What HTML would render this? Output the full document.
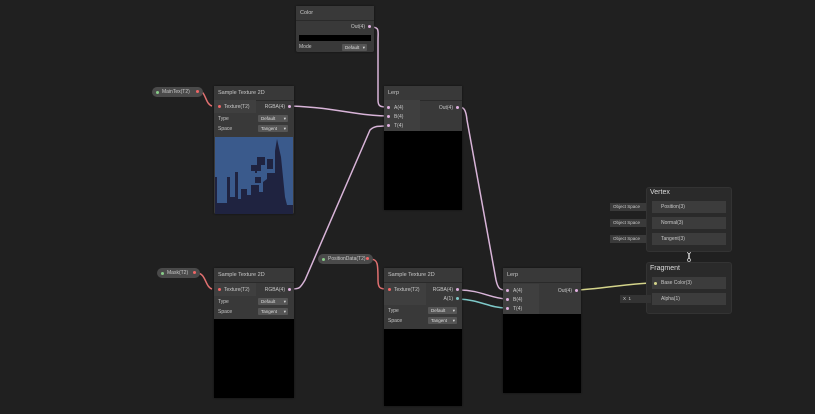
<!DOCTYPE html><html><head><style>
body{margin:0;width:815px;height:414px;background:#202020;overflow:hidden;position:relative;font-family:"Liberation Sans",sans-serif;font-size:5px;color:#c8c8c8}
.n{position:absolute;background:#393939;border-radius:2px;box-shadow:0 0 2px #111}
.h{height:14px;background:#393939;line-height:14px;padding-left:4px;font-size:5.5px;color:#c8c8c8;border-bottom:1px solid #2a2a2a}
.a{position:absolute}
.pv{position:absolute;background:#000}
.dd{position:absolute;background:#555;color:#ddd;height:7px;line-height:7px;font-size:4.5px;padding-left:3px;border-radius:1px}
.dd:after{content:"▾";position:absolute;right:2px}
.pill{position:absolute;background:#4a4a4a;border-radius:6px;height:10px;line-height:10px;font-size:5px;padding-left:10px}
.dot{position:absolute;width:3px;height:3px;border-radius:2px}
.mb{position:absolute;background:#2a2a2a;border:1px solid #333;border-radius:3px}
.row{position:absolute;background:#3c3c3c;height:12px;line-height:12px;font-size:5px;padding-left:9px;box-sizing:border-box}
.os{position:absolute;background:#3a3a3a;height:8px;line-height:8px;font-size:4.5px;padding-left:3px}
</style></head><body>
<svg class="a" style="left:0;top:0" width="815" height="414">
<g fill="none" stroke-width="1.5">
<path d="M370 27 C380 27 378 30 378 40 L378 100 C378 106 380 107 387 107" stroke="#d8b4d8"/>
<path d="M291 106 C340 108 350 115 387 116" stroke="#d8b4d8"/>
<path d="M291 289 C300 289 300 288 305 280 L370 130 C374 126 378 126 387 126" stroke="#d8b4d8"/>
<path d="M459 107 C464 107 466 110 467 120 L496 280 C498 289 500 290 506 290" stroke="#d8b4d8"/>
<path d="M459 290 C480 290 490 298 506 299" stroke="#d8b4d8"/>
<path d="M459 299 C480 300 490 308 506 308" stroke="#7ec8c8"/>
<path d="M578 290 C610 288 630 283 655 283" stroke="#d4d48a"/>
<path d="M199 91 C206 91 205 104 212 106" stroke="#e07070"/>
<path d="M197 273 C206 273 205 287 212 289" stroke="#e07070"/>
<path d="M370 259 C378 259 378 264 378 280 C378 288 380 289 387 289" stroke="#e07070"/>
<path d="M646 207 H656 M646 223 H656 M646 239 H656" stroke="#d4d48a"/>
<path d="M646 299 H656" stroke="#7ec8c8"/>
<path d="M689 252 V260" stroke="#ccc"/>
</g>
<circle cx="656" cy="207" r="1.8" fill="#202020" stroke="#d4d48a" stroke-width=".8"/>
<circle cx="656" cy="223" r="1.8" fill="#202020" stroke="#d4d48a" stroke-width=".8"/>
<circle cx="656" cy="239" r="1.8" fill="#202020" stroke="#d4d48a" stroke-width=".8"/>
<circle cx="656" cy="299" r="1.8" fill="#202020" stroke="#7ec8c8" stroke-width=".8"/>
<circle cx="689" cy="252" r="1.5" fill="#202020" stroke="#ccc" stroke-width=".8"/>
<circle cx="689" cy="260" r="1.5" fill="#202020" stroke="#ccc" stroke-width=".8"/>
</svg>

<div class="n" style="left:296px;top:6px;width:78px;height:46px"><div class="h">Color</div>
<div class="a" style="right:9px;top:18px">Out(4)</div><div class="dot" style="right:3px;top:19px;background:#e0b0e0"></div>
<div class="pv" style="left:3px;top:29px;width:72px;height:6px"></div>
<div class="a" style="left:3px;top:38px">Mode</div><div class="dd" style="left:46px;top:38px;width:22px">Default</div></div>

<div class="pill" style="left:152px;top:87px;width:41px">MainTex(T2)<div class="dot" style="left:4px;top:4px;background:#8c8"></div><div class="dot" style="right:4px;top:3px;background:#e66"></div></div>
<div class="pill" style="left:157px;top:268px;width:33px">Mask(T2)<div class="dot" style="left:4px;top:4px;background:#8c8"></div><div class="dot" style="right:4px;top:3px;background:#e66"></div></div>
<div class="pill" style="left:318px;top:254px;width:45px">PositionData(T2)<div class="dot" style="left:4px;top:4px;background:#8c8"></div><div class="dot" style="right:4px;top:3px;background:#e66"></div></div>

<div class="n" style="left:214px;top:86px;width:80px;height:128px"><div class="h">Sample Texture 2D</div>
<div class="a" style="left:0;top:14px;width:42px;height:13px;background:#3f3f3f"></div>
<div class="dot" style="left:4px;top:19px;background:#e66"></div><div class="a" style="left:10px;top:18px">Texture(T2)</div>
<div class="a" style="right:9px;top:18px">RGBA(4)</div><div class="dot" style="right:3px;top:19px;background:#e0b0e0"></div>
<div class="a" style="left:4px;top:30px">Type</div><div class="dd" style="left:44px;top:29px;width:27px">Default</div>
<div class="a" style="left:4px;top:40px">Space</div><div class="dd" style="left:44px;top:39px;width:27px">Tangent</div>
<svg class="a" style="left:1px;top:51px" width="78" height="77"><rect width="78" height="77" fill="#3a5a8c"/>
<path d="M0 77 V40 L2 40 V66 L12 66 V40 L15 40 V60 L20 60 V35 L23 35 V62 L26 62 V52 L32 52 V58 L36 58 V48 L44 48 V55 L48 55 V45 L52 42 V36 L60 36 V14 L62 2 L66 20 L68 40 L70 60 L72 68 L78 68 V77 Z" fill="#1f2340"/>
<path d="M42 20 H50 V28 H46 V34 H40 V40 H46 V46 H40 V36 H42Z M52 22 H58 V32 H52Z M36 28 H42 V34 H36Z" fill="#1f2340"/></svg></div>

<div class="n" style="left:384px;top:86px;width:78px;height:124px"><div class="h">Lerp</div>
<div class="a" style="left:0;top:14px;width:36px;height:31px;background:#3f3f3f"></div>
<div class="dot" style="left:3px;top:20px;background:#e0b0e0"></div><div class="a" style="left:10px;top:19px">A(4)</div>
<div class="dot" style="left:3px;top:29px;background:#e0b0e0"></div><div class="a" style="left:10px;top:28px">B(4)</div>
<div class="dot" style="left:3px;top:38px;background:#e0b0e0"></div><div class="a" style="left:10px;top:37px">T(4)</div>
<div class="a" style="right:9px;top:19px">Out(4)</div><div class="dot" style="right:3px;top:20px;background:#e0b0e0"></div>
<div class="pv" style="left:0;top:45px;width:78px;height:79px"></div></div>

<div class="n" style="left:214px;top:268px;width:80px;height:130px"><div class="h">Sample Texture 2D</div>
<div class="a" style="left:0;top:15px;width:42px;height:13px;background:#3f3f3f"></div>
<div class="dot" style="left:4px;top:20px;background:#e66"></div><div class="a" style="left:10px;top:19px">Texture(T2)</div>
<div class="a" style="right:9px;top:19px">RGBA(4)</div><div class="dot" style="right:3px;top:20px;background:#e0b0e0"></div>
<div class="a" style="left:4px;top:31px">Type</div><div class="dd" style="left:44px;top:30px;width:27px">Default</div>
<div class="a" style="left:4px;top:41px">Space</div><div class="dd" style="left:44px;top:40px;width:27px">Tangent</div>
<div class="pv" style="left:0;top:51px;width:80px;height:79px"></div></div>

<div class="n" style="left:384px;top:268px;width:78px;height:138px"><div class="h">Sample Texture 2D</div>
<div class="a" style="left:0;top:15px;width:42px;height:22px;background:#3f3f3f"></div>
<div class="dot" style="left:4px;top:20px;background:#e66"></div><div class="a" style="left:10px;top:19px">Texture(T2)</div>
<div class="a" style="right:9px;top:19px">RGBA(4)</div><div class="dot" style="right:3px;top:20px;background:#e0b0e0"></div>
<div class="a" style="right:9px;top:28px">A(1)</div><div class="dot" style="right:3px;top:29px;background:#7ec8c8"></div>
<div class="a" style="left:4px;top:40px">Type</div><div class="dd" style="left:44px;top:39px;width:26px">Default</div>
<div class="a" style="left:4px;top:50px">Space</div><div class="dd" style="left:44px;top:49px;width:26px">Tangent</div>
<div class="pv" style="left:0;top:61px;width:78px;height:77px"></div></div>

<div class="n" style="left:503px;top:268px;width:78px;height:125px"><div class="h">Lerp</div>
<div class="a" style="left:0;top:16px;width:36px;height:30px;background:#3f3f3f"></div>
<div class="dot" style="left:3px;top:21px;background:#e0b0e0"></div><div class="a" style="left:10px;top:20px">A(4)</div>
<div class="dot" style="left:3px;top:30px;background:#e0b0e0"></div><div class="a" style="left:10px;top:29px">B(4)</div>
<div class="dot" style="left:3px;top:39px;background:#e0b0e0"></div><div class="a" style="left:10px;top:38px">T(4)</div>
<div class="a" style="right:9px;top:20px">Out(4)</div><div class="dot" style="right:3px;top:21px;background:#e0b0e0"></div>
<div class="pv" style="left:0;top:46px;width:78px;height:79px"></div></div>

<div class="mb" style="left:646px;top:187px;width:84px;height:63px"></div>
<div class="a" style="left:650px;top:189px;font-size:7px;color:#ddd">Vertex</div>
<div class="row" style="left:652px;top:201px;width:74px">Position(3)</div>
<div class="row" style="left:652px;top:217px;width:74px">Normal(3)</div>
<div class="row" style="left:652px;top:233px;width:74px">Tangent(3)</div>
<div class="os" style="left:610px;top:203px;width:33px">Object Space</div>
<div class="os" style="left:610px;top:219px;width:33px">Object Space</div>
<div class="os" style="left:610px;top:235px;width:33px">Object Space</div>
<div class="mb" style="left:646px;top:262px;width:84px;height:50px"></div>
<div class="a" style="left:650px;top:265px;font-size:7px;color:#ddd">Fragment</div>
<div class="row" style="left:652px;top:277px;width:74px">Base Color(3)</div>
<div class="row" style="left:652px;top:293px;width:74px">Alpha(1)</div>
<div class="dot" style="left:654px;top:282px;background:#d4d48a"></div>
<div class="os" style="left:620px;top:295px;width:28px;background:#333">X&nbsp;&nbsp;1</div>
</body></html>
